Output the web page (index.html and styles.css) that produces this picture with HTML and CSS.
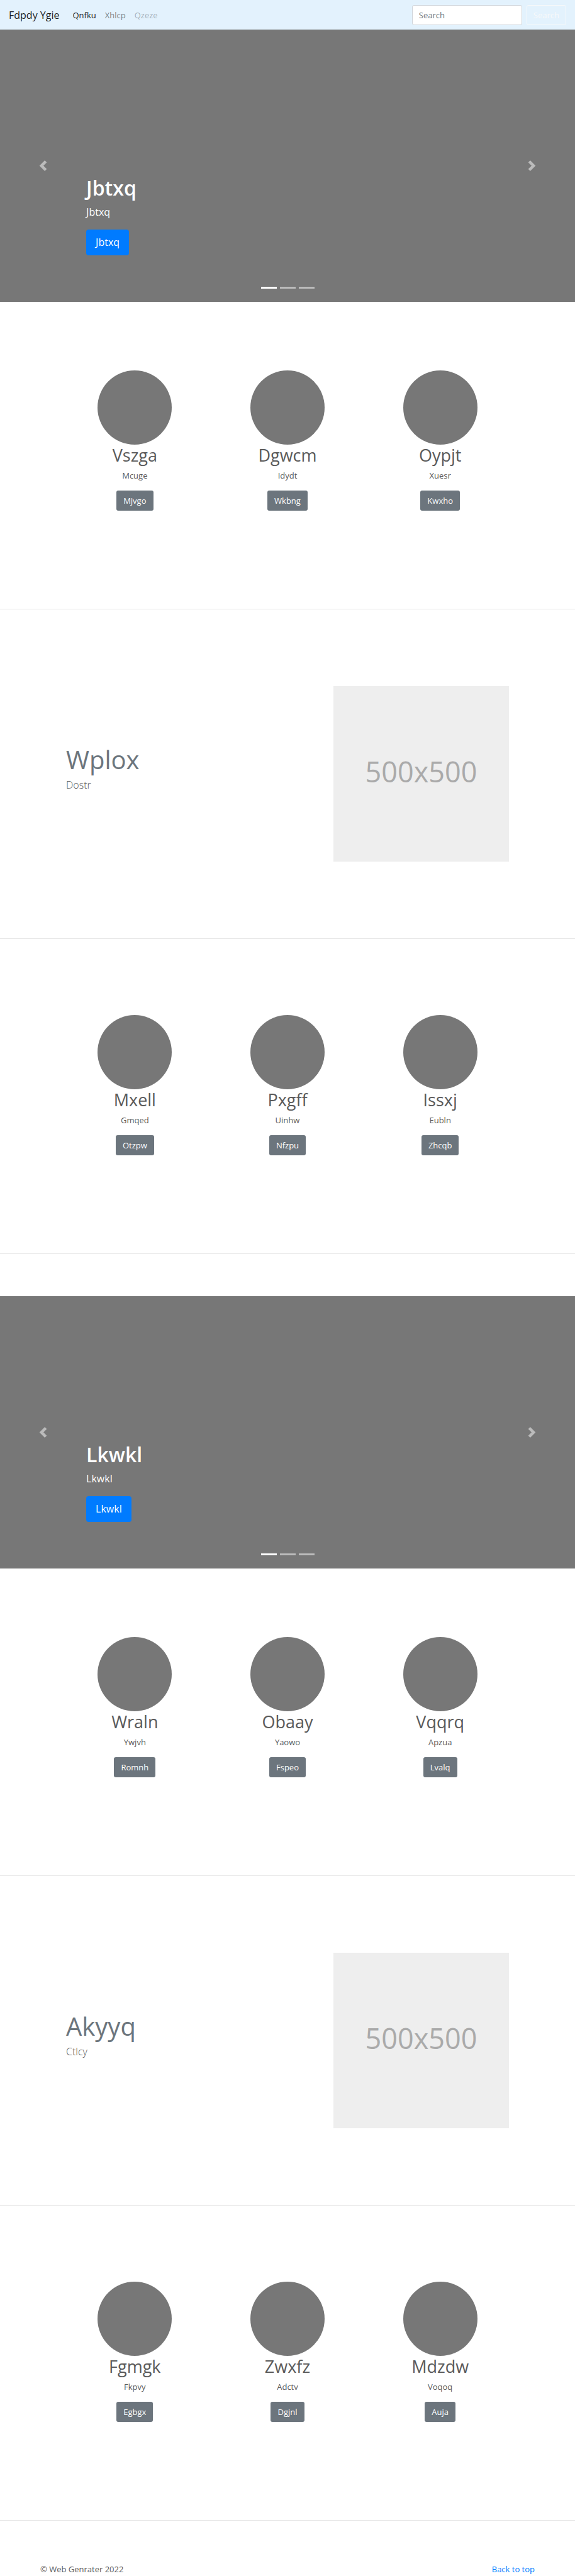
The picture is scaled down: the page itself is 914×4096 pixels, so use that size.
FILE: index.html
```html
<!DOCTYPE html>
<html lang="en">
<head>
<meta charset="utf-8">
<meta name="viewport" content="width=device-width, initial-scale=1">
<title>Fdpdy Ygie</title>
<link rel="stylesheet" href="styles.css">
</head>
<body>
<header class="navbar" id="top">
  <a class="brand" href="#">Fdpdy Ygie</a>
  <nav class="nav">
    <a class="nav-link active" href="#">Qnfku</a>
    <a class="nav-link" href="#">Xhlcp</a>
    <a class="nav-link disabled" href="#" aria-disabled="true">Qzeze</a>
  </nav>
  <form class="search">
    <input class="search-input" type="search" placeholder="Search" aria-label="Search">
    <button class="btn btn-outline" type="submit">Search</button>
  </form>
</header>
<main>
  <section class="carousel">
    <div class="caption">
      <h1 class="caption-title">Jbtxq</h1>
      <p class="caption-text">Jbtxq</p>
      <a class="btn btn-primary" href="#">Jbtxq</a>
    </div>
    <button class="control prev" type="button" aria-label="Previous"><svg class="chevron" viewBox="0 0 8 8" fill="#fff"><path d="M5.25 0l-4 4 4 4 1.5-1.5L4.25 4l2.5-2.5L5.25 0z"/></svg></button>
    <button class="control next" type="button" aria-label="Next"><svg class="chevron" viewBox="0 0 8 8" fill="#fff"><path d="M2.75 0l-1.5 1.5L3.75 4l-2.5 2.5L2.75 8l4-4-4-4z"/></svg></button>
    <ol class="indicators"><li class="indicator current"></li><li class="indicator"></li><li class="indicator"></li></ol>
  </section>

  <section class="cards cards-first">
    <article class="card"><div class="avatar"></div><h2 class="card-title">Vszga</h2><p class="card-text">Mcuge</p><a class="btn btn-secondary" href="#">Mjvgo</a></article>
    <article class="card"><div class="avatar"></div><h2 class="card-title">Dgwcm</h2><p class="card-text">Idydt</p><a class="btn btn-secondary" href="#">Wkbng</a></article>
    <article class="card"><div class="avatar"></div><h2 class="card-title">Oypjt</h2><p class="card-text">Xuesr</p><a class="btn btn-secondary" href="#">Kwxho</a></article>
  </section>
  <hr class="divider">
  <section class="feature">
    <div class="feature-body"><h2 class="feature-title">Wplox</h2><p class="feature-text">Dostr</p></div>
    <div class="placeholder">500x500</div>
  </section>
  <hr class="divider">
  <section class="cards">
    <article class="card"><div class="avatar"></div><h2 class="card-title">Mxell</h2><p class="card-text">Gmqed</p><a class="btn btn-secondary" href="#">Otzpw</a></article>
    <article class="card"><div class="avatar"></div><h2 class="card-title">Pxgff</h2><p class="card-text">Uinhw</p><a class="btn btn-secondary" href="#">Nfzpu</a></article>
    <article class="card"><div class="avatar"></div><h2 class="card-title">Issxj</h2><p class="card-text">Eubln</p><a class="btn btn-secondary" href="#">Zhcqb</a></article>
  </section>
  <hr class="divider divider-end">

  <section class="carousel">
    <div class="caption">
      <h1 class="caption-title">Lkwkl</h1>
      <p class="caption-text">Lkwkl</p>
      <a class="btn btn-primary" href="#">Lkwkl</a>
    </div>
    <button class="control prev" type="button" aria-label="Previous"><svg class="chevron" viewBox="0 0 8 8" fill="#fff"><path d="M5.25 0l-4 4 4 4 1.5-1.5L4.25 4l2.5-2.5L5.25 0z"/></svg></button>
    <button class="control next" type="button" aria-label="Next"><svg class="chevron" viewBox="0 0 8 8" fill="#fff"><path d="M2.75 0l-1.5 1.5L3.75 4l-2.5 2.5L2.75 8l4-4-4-4z"/></svg></button>
    <ol class="indicators"><li class="indicator current"></li><li class="indicator"></li><li class="indicator"></li></ol>
  </section>

  <section class="cards cards-first">
    <article class="card"><div class="avatar"></div><h2 class="card-title">Wraln</h2><p class="card-text">Ywjvh</p><a class="btn btn-secondary" href="#">Romnh</a></article>
    <article class="card"><div class="avatar"></div><h2 class="card-title">Obaay</h2><p class="card-text">Yaowo</p><a class="btn btn-secondary" href="#">Fspeo</a></article>
    <article class="card"><div class="avatar"></div><h2 class="card-title">Vqqrq</h2><p class="card-text">Apzua</p><a class="btn btn-secondary" href="#">Lvalq</a></article>
  </section>
  <hr class="divider">
  <section class="feature">
    <div class="feature-body"><h2 class="feature-title">Akyyq</h2><p class="feature-text">Ctlcy</p></div>
    <div class="placeholder">500x500</div>
  </section>
  <hr class="divider">
  <section class="cards">
    <article class="card"><div class="avatar"></div><h2 class="card-title">Fgmgk</h2><p class="card-text">Fkpvy</p><a class="btn btn-secondary" href="#">Egbgx</a></article>
    <article class="card"><div class="avatar"></div><h2 class="card-title">Zwxfz</h2><p class="card-text">Adctv</p><a class="btn btn-secondary" href="#">Dgjnl</a></article>
    <article class="card"><div class="avatar"></div><h2 class="card-title">Mdzdw</h2><p class="card-text">Voqoq</p><a class="btn btn-secondary" href="#">Auja</a></article>
  </section>
  <hr class="divider divider-end">
</main>
<footer class="footer">
  <span>© Web Genrater 2022</span>
  <a class="footer-link" href="#top">Back to top</a>
</footer>
</body>
</html>
```
FILE: styles.css
```css
* { box-sizing: border-box; }
body {
  margin: 0;
  background: #fff;
  color: #5a5a5a;
  font: 13px/20px "Open Sans", "Noto Sans", sans-serif;
}
h1, h2, p, ol { margin: 0; padding: 0; }
a { text-decoration: none; }

.navbar {
  display: flex;
  align-items: center;
  height: 47px;
  padding: 0 14px;
  background: #e3f2fd;
}
.brand { margin-right: 14px; font-size: 16px; line-height: 24px; color: rgba(0, 0, 0, .9); }
.nav { display: flex; flex: 1; }
.nav-link { padding: 7px; color: rgba(0, 0, 0, .5); }
.nav-link.active { color: rgba(0, 0, 0, .9); }
.nav-link.disabled { color: rgba(0, 0, 0, .3); }
.search { display: flex; gap: 7px; }
.search-input {
  width: 175px;
  height: 32px;
  padding: 0 10px;
  border: 1px solid #ced4da;
  border-radius: 3px;
  background: #fff;
  font: inherit;
}
.search-input::placeholder { color: #6c757d; opacity: 1; }

.btn {
  display: inline-block;
  padding: 5px 10px;
  border: 1px solid transparent;
  border-radius: 3px;
  font: inherit;
  color: #fff;
}
.btn-outline { border-color: #f8f9fa; background: transparent; color: #f8f9fa; }
.btn-secondary { background: #6c757d; }
.btn-primary { padding: 8px 14px; border-radius: 4px; background: #007bff; font-size: 16px; line-height: 23px; }

.carousel {
  position: relative;
  display: flex;
  flex-direction: column;
  justify-content: flex-end;
  height: 433px;
  padding: 0 15% 74px;
  background: #777;
  color: #fff;
}
.caption { display: flex; flex-direction: column; align-items: flex-start; }
.caption-title { margin-bottom: 6px; font-size: 32px; line-height: 40px; font-weight: 600; }
.caption-text { margin-bottom: 16px; font-size: 16px; line-height: 24px; }
.control {
  position: absolute;
  top: 0;
  bottom: 0;
  width: 15%;
  display: flex;
  align-items: center;
  justify-content: center;
  padding: 0;
  border: 0;
  background: none;
  opacity: .5;
}
.prev { left: 0; }
.next { right: 0; }
.chevron { width: 17px; height: 17px; }
.indicators {
  position: absolute;
  right: 0;
  bottom: 21px;
  left: 0;
  display: flex;
  justify-content: center;
  gap: 5px;
  list-style: none;
}
.indicator { width: 25px; height: 3px; background: #fff; opacity: .5; }
.indicator.current { opacity: 1; }

.cards {
  display: grid;
  grid-template-columns: repeat(3, 1fr);
  max-width: 728px;
  margin: 0 auto;
  padding: 121px 0 156px;
}
.cards-first { padding-top: 109px; }
.card { display: flex; flex-direction: column; align-items: center; }
.avatar { width: 118px; height: 118px; border-radius: 50%; background: #777; }
.card-title { margin-bottom: 5px; font-size: 27px; line-height: 34px; font-weight: 400; }
.card-text { margin-bottom: 14px; }

.divider { margin: 0; border: 0; border-top: 1px solid #e5e5e5; }
.divider-end { margin-bottom: 67px; }

.feature {
  display: grid;
  grid-template-columns: 7fr 5fr;
  align-items: center;
  column-gap: 34px;
  max-width: 728px;
  margin: 0 auto;
  padding: 122px 12px;
}
.feature-title { margin-bottom: 4px; font-size: 40px; line-height: 48px; font-weight: 400; color: #6c757d; }
.feature-text { margin-bottom: 18px; font-size: 16px; line-height: 24px; font-weight: 300; }
.placeholder {
  display: flex;
  align-items: center;
  justify-content: center;
  aspect-ratio: 1;
  padding-bottom: 8px;
  background: #eee;
  color: #aaa;
  font-size: 45px;
  line-height: 64px;
}

.footer {
  display: flex;
  justify-content: space-between;
  padding: 0 7%;
}
.footer-link { color: #007bff; }
```
